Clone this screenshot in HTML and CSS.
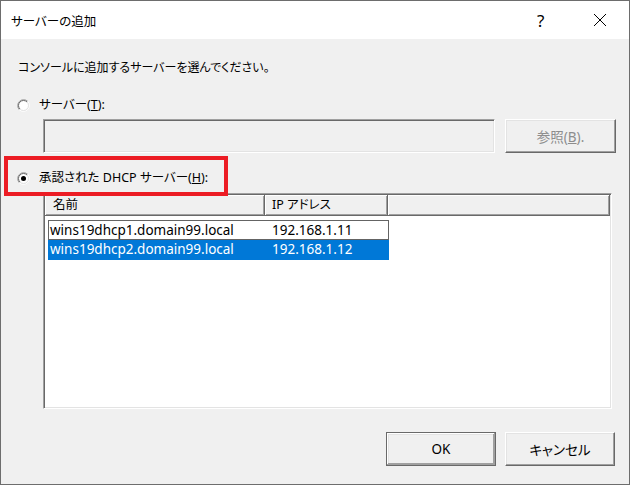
FILE: index.html
```html
<!DOCTYPE html>
<html lang="ja">
<head>
  <meta charset="UTF-8">
  <title>サーバーの追加</title>
  <link rel="stylesheet" href="styles.css">
</head>
<body>
  <div class="dialog">
    <div class="titlebar">
      <span class="title">サーバーの追加</span>
      <span class="help">?</span>
      <span class="close">
        <svg width="14" height="14" viewBox="0 0 14 14"><path d="M1 1 L13 13 M13 1 L1 13" stroke="#000" stroke-width="1" fill="none"/></svg>
      </span>
    </div>

    <div class="content">
      <p class="intro">コンソールに追加するサーバーを選んでください。</p>

      <label class="radio">
        <svg class="radio-icon" width="13" height="13" viewBox="0 0 13 13">
          <circle cx="6.5" cy="6.5" r="5" fill="#fff"/>
          <path d="M2.26 10.74 A6 6 0 0 1 10.74 2.26" stroke="#a0a0a0" fill="none"/>
          <path d="M10.74 2.26 A6 6 0 0 1 2.26 10.74" stroke="#fff" fill="none"/>
          <path d="M2.96 10.04 A5 5 0 0 1 10.04 2.96" stroke="#696969" fill="none"/>
          <path d="M10.04 2.96 A5 5 0 0 1 2.96 10.04" stroke="#e3e3e3" fill="none"/>
        </svg>
        <span>サーバー(<u>T</u>):</span>
      </label>

      <div class="server-row">
        <div class="textbox"></div>
        <button class="btn" disabled>参照(<u>B</u>).</button>
      </div>

      <!-- 選択中のラジオ + 赤枠 -->
      <label class="radio picked">
        <svg class="radio-icon" width="13" height="13" viewBox="0 0 13 13">
          <circle cx="6.5" cy="6.5" r="5" fill="#fff"/>
          <path d="M2.26 10.74 A6 6 0 0 1 10.74 2.26" stroke="#a0a0a0" fill="none"/>
          <path d="M10.74 2.26 A6 6 0 0 1 2.26 10.74" stroke="#fff" fill="none"/>
          <path d="M2.96 10.04 A5 5 0 0 1 10.04 2.96" stroke="#696969" fill="none"/>
          <path d="M10.04 2.96 A5 5 0 0 1 2.96 10.04" stroke="#e3e3e3" fill="none"/>
          <circle cx="6.5" cy="6.5" r="2.5" fill="#000"/>
        </svg>
        <span>承認された DHCP サーバー(<u>H</u>):</span>
        <span class="callout"></span>
      </label>

      <div class="list">
        <div class="list-head">
          <div class="col col-name">名前</div>
          <div class="col col-ip">IP アドレス</div>
          <div class="col col-fill"></div>
        </div>
        <div class="row focused">
          <span class="cell-name">wins19dhcp1.domain99.local</span>
          <span class="cell-ip">192.168.1.11</span>
        </div>
        <div class="row selected">
          <span class="cell-name">wins19dhcp2.domain99.local</span>
          <span class="cell-ip">192.168.1.12</span>
        </div>
      </div>

      <div class="actions">
        <button class="btn default">OK</button>
        <button class="btn">キャンセル</button>
      </div>
    </div>
  </div>
</body>
</html>
```

FILE: styles.css
```css
html, body {
  margin: 0;
  padding: 0;
  background: #fff;
}
body {
  font-family: "Noto Sans", "Noto Sans CJK JP", sans-serif;
  font-size: 13.5px;
  font-feature-settings: "palt";
  color: #000;
}
.dialog {
  width: 630px;
  height: 485px;
  box-sizing: border-box;
  border: 1px solid #6d6d6d;
  background: #f0f0f0;
  display: flex;
  flex-direction: column;
}
.titlebar {
  height: 38px;
  background: #fff;
  display: flex;
  align-items: center;
  flex-shrink: 0;
}
.title {
  margin-left: 10px;
  font-size: 12.5px;
  flex: 1;
}
.help {
  font-size: 17px;
  width: 12px;
  margin-right: 44px;
}
.close {
  display: flex;
  margin-right: 22px;
}
.content {
  padding-left: 16px;
  display: flex;
  flex-direction: column;
  align-items: flex-start;
}
.intro {
  margin: 20px 0 0 1px;
  line-height: 18px;
  font-size: 12px;
}
.radio {
  display: flex;
  align-items: center;
  height: 18px;
  line-height: 18px;
  margin-top: 19px;
  position: relative;
  font-size: 12.5px;
}
.radio-icon {
  margin-right: 9px;
}
.radio.picked {
  margin-top: 16px;
}
.callout {
  position: absolute;
  left: -13px;
  top: -13px;
  width: 216px;
  height: 32px;
  border: 4px solid #ec1c24;
}
.server-row {
  display: flex;
  gap: 10px;
  margin: 5px 0 0 26px;
}
.textbox {
  width: 452px;
  height: 34px;
  box-sizing: border-box;
  border: 1px solid;
  border-color: #a0a0a0 #fff #fff #a0a0a0;
  box-shadow: inset 1px 1px #696969, inset -1px -1px #e3e3e3;
  background: #f0f0f0;
}
.btn {
  width: 110px;
  height: 34px;
  box-sizing: border-box;
  font: inherit;
  color: #000;
  background: #f0f0f0;
  border: 1px solid;
  border-color: #fff #696969 #696969 #fff;
  box-shadow: inset -1px -1px #a0a0a0, inset 1px 1px #e3e3e3;
  padding: 0;
}
.btn:disabled {
  color: #8d8d8d;
  width: 111px;
}
.btn.default {
  outline: 1px solid #696969;
  outline-offset: -1px;
  border-color: #696969;
  box-shadow: inset -1px -1px #a0a0a0, inset 1px 1px #fff, inset -2px -2px #a0a0a0, inset 2px 2px #e3e3e3;
}
.list {
  width: 569px;
  height: 216px;
  box-sizing: border-box;
  margin: 6px 0 0 26px;
  border: 1px solid;
  border-color: #a0a0a0 #fff #fff #a0a0a0;
  box-shadow: inset 1px 1px #696969, inset -1px -1px #e3e3e3;
  background: #fff;
  padding: 1px;
}
.list-head {
  display: flex;
  height: 21px;
  line-height: 20px;
  margin-bottom: 4px;
  font-size: 12.5px;
}
.col {
  box-sizing: border-box;
  background: #f0f0f0;
  border-right: 1px solid #696969;
  border-bottom: 1px solid #696969;
  box-shadow: inset 1px 1px #fff, inset -1px -1px #a0a0a0;
}
.col-name {
  width: 220px;
  padding-left: 8px;
}
.col-ip {
  width: 123px;
  padding-left: 7px;
}
.col-fill {
  flex: 1;
}
.row {
  display: flex;
  width: 341px;
  height: 20px;
  line-height: 19px;
  margin-left: 3px;
  box-sizing: border-box;
}
.row.focused {
  border: 1px solid #646464;
}
.row.selected {
  background: #0078d7;
  color: #fff;
}
.cell-name {
  width: 217px;
  padding-left: 2px;
  box-sizing: border-box;
}
.row.focused .cell-name {
  width: 216px;
  padding-left: 1px;
}
.cell-ip {
  padding-left: 7px;
}
.actions {
  align-self: stretch;
  display: flex;
  justify-content: flex-end;
  gap: 9px;
  margin-top: 23px;
  padding-right: 14px;
}
```
